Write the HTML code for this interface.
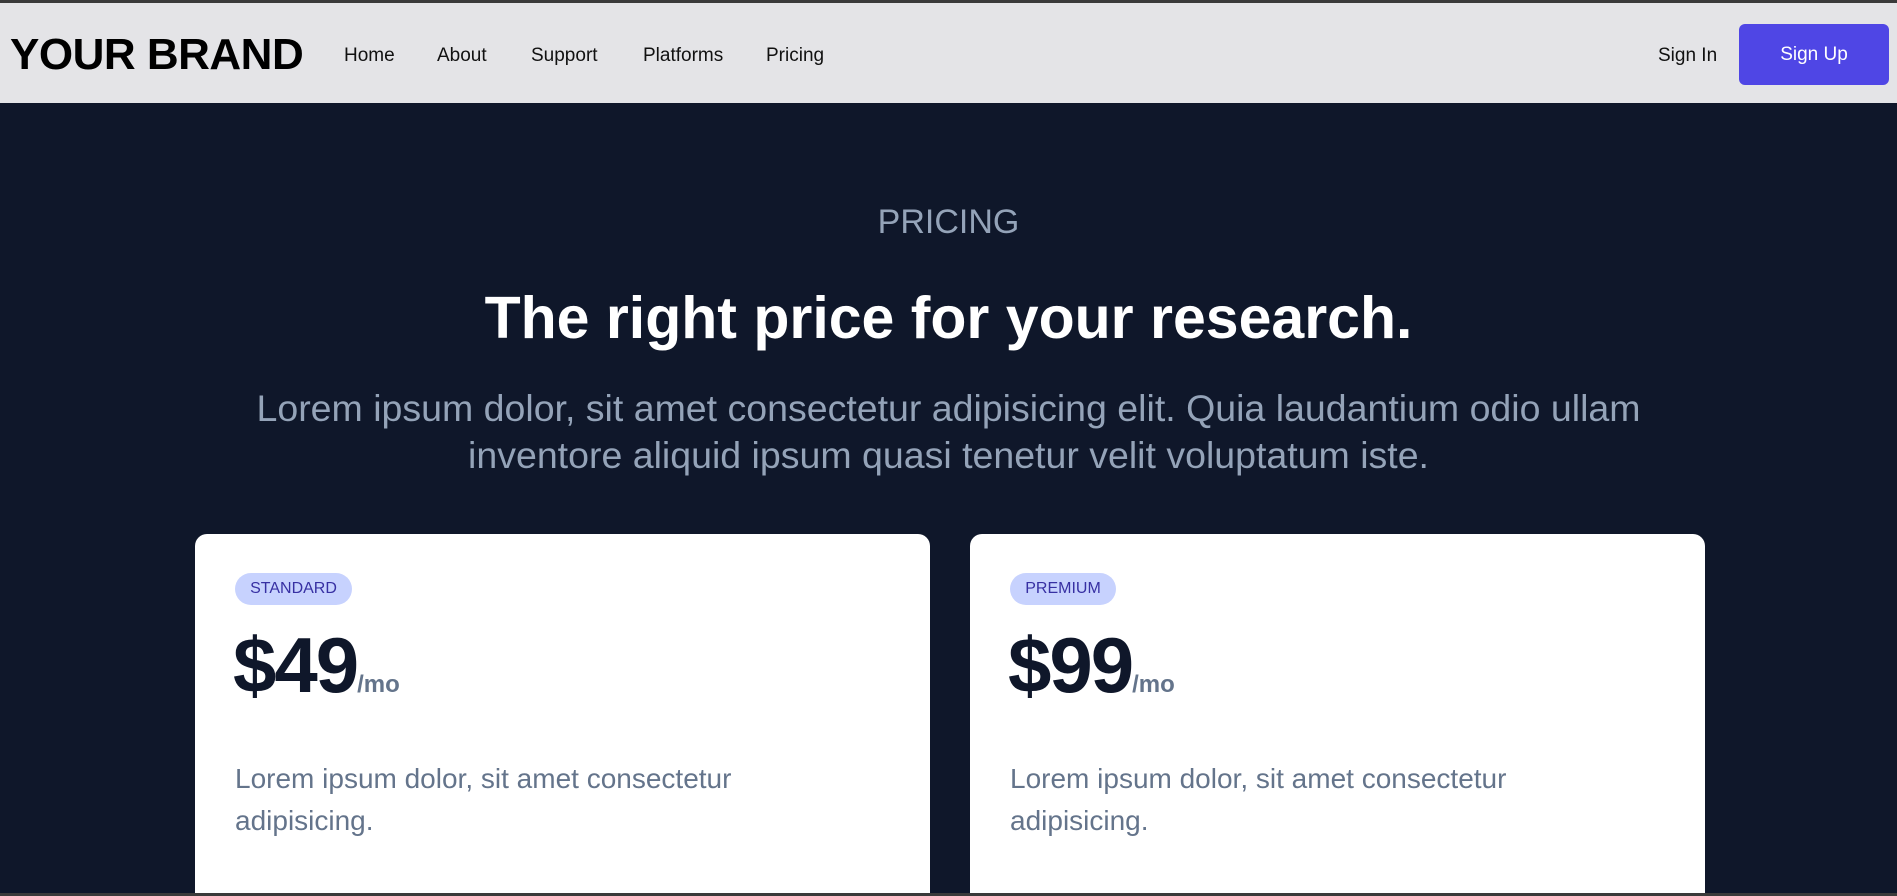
<!DOCTYPE html>
<html><head><meta charset="utf-8"><style>
*{margin:0;padding:0;box-sizing:border-box}
html,body{width:1897px;height:896px;overflow:hidden}
body{background:#0f172a;font-family:"Liberation Sans",sans-serif;position:relative}
.nav{position:absolute;left:0;top:0;width:1897px;height:103px;background:#e4e4e7;border-top:3px solid #3a3a3a}
.brand{position:absolute;left:10px;top:27px;font-size:44px;font-weight:bold;color:#000;letter-spacing:-0.5px}
.nav a{position:absolute;top:42px;font-size:19px;color:#111;text-decoration:none}
.btn{position:absolute;left:1739px;top:21px;width:150px;height:61px;background:#4f46e5;border-radius:6px;color:#fff;font-size:19px;text-align:center;line-height:61px}
.c{position:absolute;left:0;width:1897px;text-align:center}
.card{position:absolute;top:534px;width:735px;height:359px;background:#fff;border-radius:12px 12px 0 0}
.badge{position:absolute;left:40px;top:39px;width:117px;height:32px;background:#c7d2fe;border-radius:16px;color:#3730a3;font-size:16px;text-align:center;line-height:32px}
.price{position:absolute;left:38px;top:86px;font-size:78px;font-weight:bold;color:#0f172a;letter-spacing:-2px}
.price span{font-size:24px;color:#64748b;letter-spacing:0}
.desc{position:absolute;left:40px;top:224px;font-size:28px;line-height:42px;color:#64748b;width:600px}
.bot{position:absolute;left:0;top:893px;width:1897px;height:3px;background:#3a3a3a}
</style></head><body>
<div class="nav">
<div class="brand">YOUR BRAND</div>
<a style="left:344px">Home</a><a style="left:437px">About</a><a style="left:531px">Support</a><a style="left:643px">Platforms</a><a style="left:766px">Pricing</a>
<a style="left:1658px">Sign In</a>
<div class="btn">Sign Up</div>
</div>
<div class="c" style="top:203px;font-size:34px;color:#94a3b8">PRICING</div>
<div class="c" style="top:284px;font-size:59px;font-weight:bold;color:#fff">The right price for your research.</div>
<div class="c" style="top:385px;font-size:37.5px;line-height:47px;color:#94a3b8;padding:0 190px">Lorem ipsum dolor, sit amet consectetur adipisicing elit. Quia laudantium odio ullam inventore aliquid ipsum quasi tenetur velit voluptatum iste.</div>
<div class="card" style="left:195px"><div class="badge">STANDARD</div><div class="price">$49<span>/mo</span></div><div class="desc">Lorem ipsum dolor, sit amet consectetur adipisicing.</div></div>
<div class="card" style="left:970px"><div class="badge" style="width:106px">PREMIUM</div><div class="price">$99<span>/mo</span></div><div class="desc">Lorem ipsum dolor, sit amet consectetur adipisicing.</div></div>
<div class="bot"></div>
</body></html>
